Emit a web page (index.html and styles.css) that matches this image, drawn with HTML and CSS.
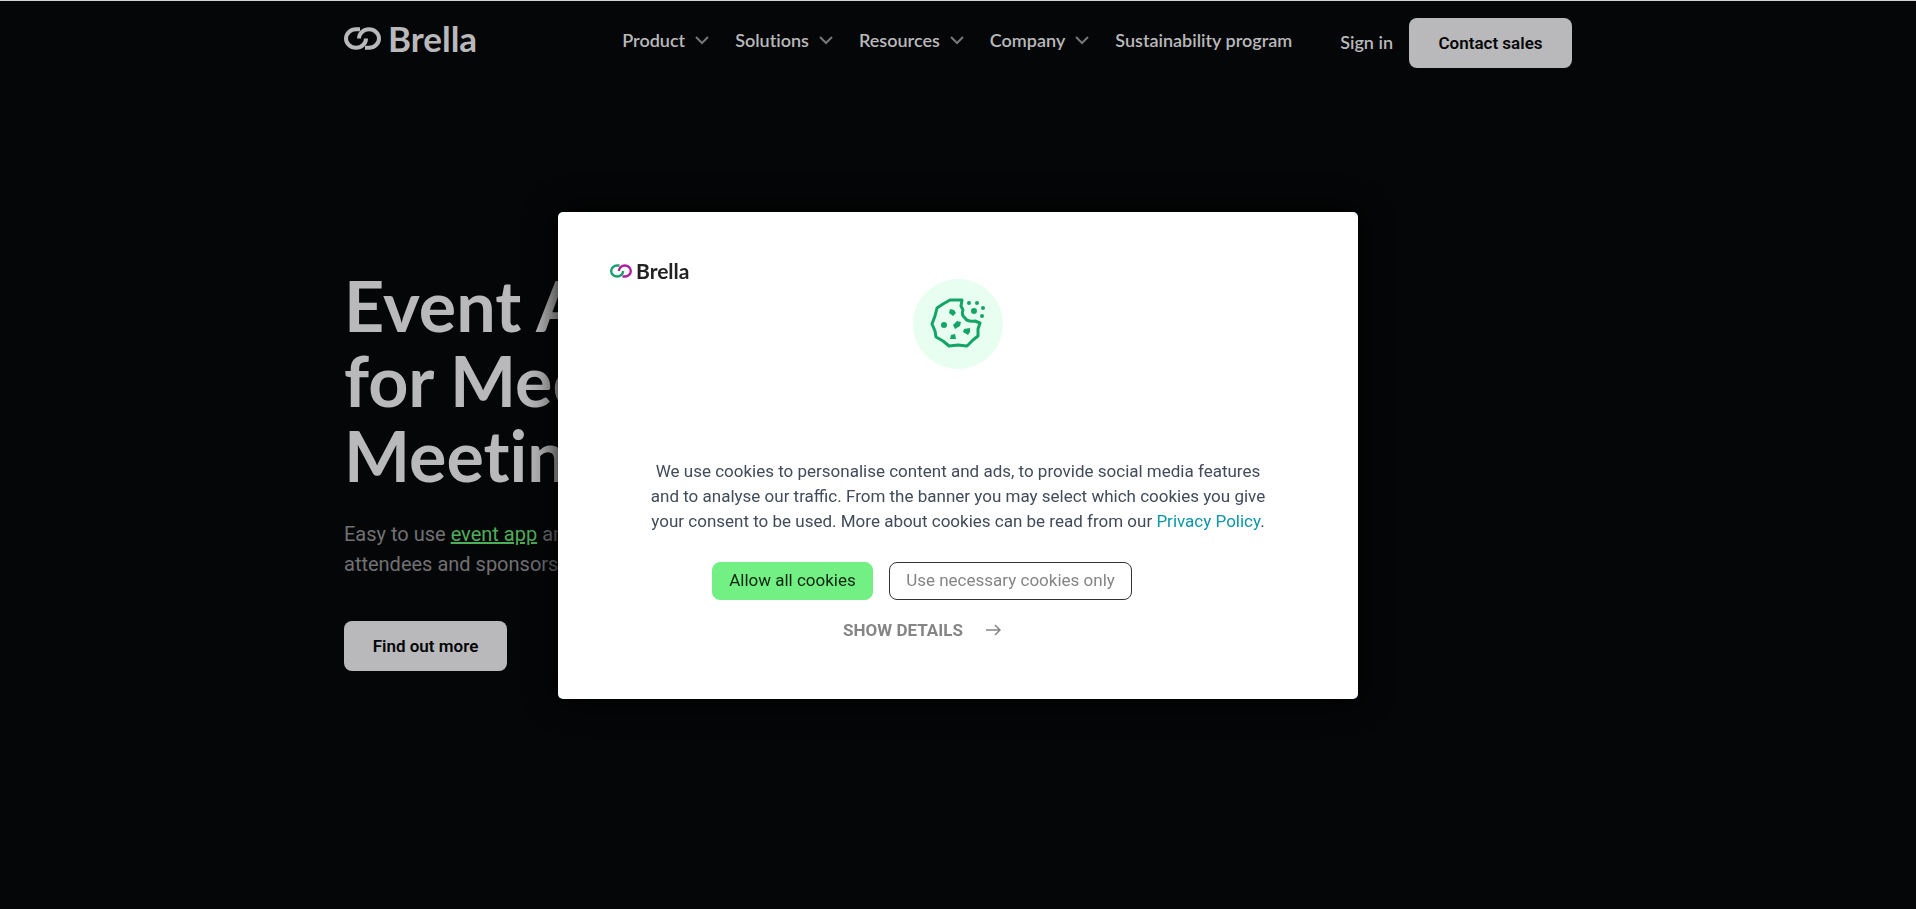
FILE: index.html
```
<!DOCTYPE html>
<html lang="en">
<head>
    <meta charset="UTF-8">
    <meta name="viewport" content="width=device-width, initial-scale=1">
    <title>Brella</title>
    <link rel="stylesheet" href="styles.css">
</head>
<body>
    <header class="site-header">
        <div class="container header-row">
            <a class="logo" href="#">
                <svg class="logo-mark" viewBox="0 0 37 23" aria-hidden="true">
                    <path class="ring-left" d="M16 2.200H12A10 9.300 0 1 0 22 11.500"/>
                    <path class="ring-right" d="M21 20.800H25A10 9.300 0 1 0 15 11.500"/>
                </svg>
                <span class="logo-text">Brella</span>
            </a>
            <nav class="main-nav">
                <a href="#">Product <svg class="chevron" viewBox="0 0 14 9" aria-hidden="true"><path d="M1 1l6 6 6-6"/></svg></a>
                <a href="#">Solutions <svg class="chevron" viewBox="0 0 14 9" aria-hidden="true"><path d="M1 1l6 6 6-6"/></svg></a>
                <a href="#">Resources <svg class="chevron" viewBox="0 0 14 9" aria-hidden="true"><path d="M1 1l6 6 6-6"/></svg></a>
                <a href="#">Company <svg class="chevron" viewBox="0 0 14 9" aria-hidden="true"><path d="M1 1l6 6 6-6"/></svg></a>
                <a href="#">Sustainability program</a>
            </nav>
            <div class="header-actions">
                <a class="sign-in" href="#">Sign in</a>
                <a class="btn-light" href="#">Contact sales</a>
            </div>
        </div>
    </header>

    <main class="container hero">
        <h1>Event App<br>for Meetings<br>Meetings</h1>
        <p>Easy to use <a href="#">event app</a> and<br>attendees and sponsors</p>
        <a class="btn-light" href="#">Find out more</a>
    </main>

    <!-- cookie consent -->
    <div class="overlay">
        <div class="modal" role="dialog" aria-label="Cookies">
            <div class="logo logo-small">
                <svg class="logo-mark" viewBox="0 0 37 23" aria-hidden="true">
                    <path class="ring-left" d="M16 2.200H12A10 9.300 0 1 0 22 11.500"/>
                    <path class="ring-right" d="M21 20.800H25A10 9.300 0 1 0 15 11.500"/>
                </svg>
                <span class="logo-text">Brella</span>
            </div>
            <svg class="cookie" viewBox="0 0 90 90" aria-hidden="true">
                <circle class="cookie-bg" cx="45" cy="45" r="45"/>
                <path class="cookie-line" d="M49 21L37 21L30 25L24 29L22 37L19 45L22 52L23 58L30 62L36 67L45 66L54 67L60 61L65 57L65 50L67 44L62 42Q54 43 52 39Q48 36 50 31L48 27Z"/>
                <path class="cookie-fill" d="M37 30l4 1 2 3-3 3-4-3zM44 42l4 1-1 4-5 3-2-4zM51 50l6-1 0 4-2 3-5-3zM38 56l4-1 1 5-6 0z"/>
                <circle class="cookie-fill" cx="31" cy="46" r="3"/>
                <circle class="cookie-fill" cx="61" cy="32" r="3"/>
                <circle class="cookie-fill" cx="56" cy="24" r="2"/>
                <circle class="cookie-fill" cx="64" cy="24" r="2"/>
                <circle class="cookie-fill" cx="70" cy="29" r="2"/>
                <circle class="cookie-fill" cx="69" cy="37" r="2"/>
            </svg>
            <p class="modal-text">We use cookies to personalise content and ads, to provide social media features and to analyse our traffic. From the banner you may select which cookies you give your consent to be used. More about cookies can be read from our <a href="#">Privacy Policy</a>.</p>
            <div class="modal-actions">
                <button class="btn btn-allow" type="button">Allow all cookies</button>
                <button class="btn btn-necessary" type="button">Use necessary cookies only</button>
            </div>
            <button class="show-details" type="button">
                SHOW DETAILS
                <svg viewBox="0 0 16 12" aria-hidden="true"><path d="M1 6h14M10 1l5 5-5 5"/></svg>
            </button>
        </div>
    </div>
</body>
</html>
```

FILE: styles.css
```
* {
    box-sizing: border-box;
}

body {
    margin: 0;
    min-height: 100vh;
    background: #050607;
    border-top: 1px solid #cfd5d5;
    font-family: Roboto, sans-serif;
    color: #b9b9bb;
    overflow: hidden;
}

a {
    color: inherit;
    text-decoration: none;
}

.container {
    max-width: 1268px;
    margin: 0 auto;
    padding: 0 20px;
}

/* header */
.header-row {
    display: flex;
    align-items: center;
    height: 84px;
}

.logo {
    display: flex;
    align-items: center;
    gap: 7px;
}

.header-row .logo {
    padding-bottom: 10px;
}

.logo-mark {
    width: 37px;
    height: 23px;
    fill: none;
    stroke: #b9b9bb;
    stroke-width: 4;
}

.logo-text {
    font-family: Lato, sans-serif;
    font-size: 35px;
    font-weight: 700;
    line-height: 24px;
}

.main-nav {
    display: flex;
    gap: 26px;
    margin-left: auto;
    padding-bottom: 6px;
    font-family: Lato, sans-serif;
    font-size: 18px;
    font-weight: 600;
    font-variant-ligatures: none;
}

.main-nav a {
    display: flex;
    align-items: center;
    gap: 10px;
}

.chevron {
    width: 14px;
    height: 9px;
    fill: none;
    stroke: #77777a;
    stroke-width: 2;
}

.header-actions {
    display: flex;
    align-items: center;
    gap: 16px;
    margin-left: 48px;
}

.sign-in {
    padding-bottom: 2px;
    font-family: Lato, sans-serif;
    font-size: 18px;
    font-weight: 600;
}

.btn-light {
    display: inline-block;
    min-width: 163px;
    padding: 0 24px;
    border-radius: 8px;
    background: #b9b9bb;
    color: #050607;
    font-size: 17px;
    font-weight: 600;
    line-height: 50px;
    text-align: center;
}

/* hero */
.hero {
    padding-top: 183px;
}

.hero h1 {
    margin: 0 0 26px;
    font-family: Lato, sans-serif;
    font-size: 70px;
    font-weight: 700;
    font-variant-ligatures: none;
    line-height: 75px;
}

.hero p {
    margin: 0 0 42px;
    color: #717174;
    font-size: 20px;
    line-height: 30px;
}

.hero p a {
    color: #4fae5a;
    text-decoration: underline;
}

/* cookie modal */
.overlay {
    position: fixed;
    inset: 1px 0 0;
    display: flex;
    align-items: center;
    justify-content: center;
}

.modal {
    display: flex;
    flex-direction: column;
    align-items: center;
    width: 100%;
    max-width: 800px;
    padding: 51px 52px 57px;
    border-radius: 5px;
    background: #fff;
    box-shadow: 0 0 32px #000;
}

.logo-small {
    align-self: flex-start;
    gap: 4px;
    color: #222;
}

.logo-small .logo-mark {
    width: 22px;
    height: 14px;
}

.logo-small .logo-text {
    font-size: 21px;
    line-height: 16px;
}

.logo-small .ring-left {
    stroke: #18a06c;
}

.logo-small .ring-right {
    stroke: #ad1fa0;
}

.cookie {
    width: 90px;
    height: 90px;
}

.cookie-bg {
    fill: #e8fef0;
}

.cookie-line {
    fill: none;
    stroke: #12a566;
    stroke-width: 3;
    stroke-linejoin: round;
}

.cookie-fill {
    fill: #12a566;
}

.modal-text {
    max-width: 624px;
    margin: 90px 0 28px;
    color: #414b5a;
    font-size: 17px;
    line-height: 25px;
    text-align: center;
}

.modal-text a {
    color: #0d97a7;
}

.modal-actions {
    display: flex;
    gap: 16px;
    margin-right: 72px;
}

.btn {
    height: 38px;
    padding: 0 16px 2px;
    border: 1px solid #333;
    border-radius: 8px;
    background: #fff;
    color: #858585;
    font-family: inherit;
    font-size: 17px;
}

.btn-allow {
    min-width: 161px;
    border-color: #72f083;
    background: #72f083;
    color: #0b2410;
}

.btn-necessary {
    min-width: 243px;
}

.show-details {
    display: flex;
    align-items: center;
    gap: 22px;
    margin: 18px 72px 0 0;
    padding: 0;
    border: 0;
    background: none;
    color: #858585;
    font-family: inherit;
    font-size: 17px;
    font-weight: 700;
    line-height: 24px;
}

.show-details svg {
    width: 16px;
    height: 12px;
    fill: none;
    stroke: #858585;
    stroke-width: 1.5;
}
```
